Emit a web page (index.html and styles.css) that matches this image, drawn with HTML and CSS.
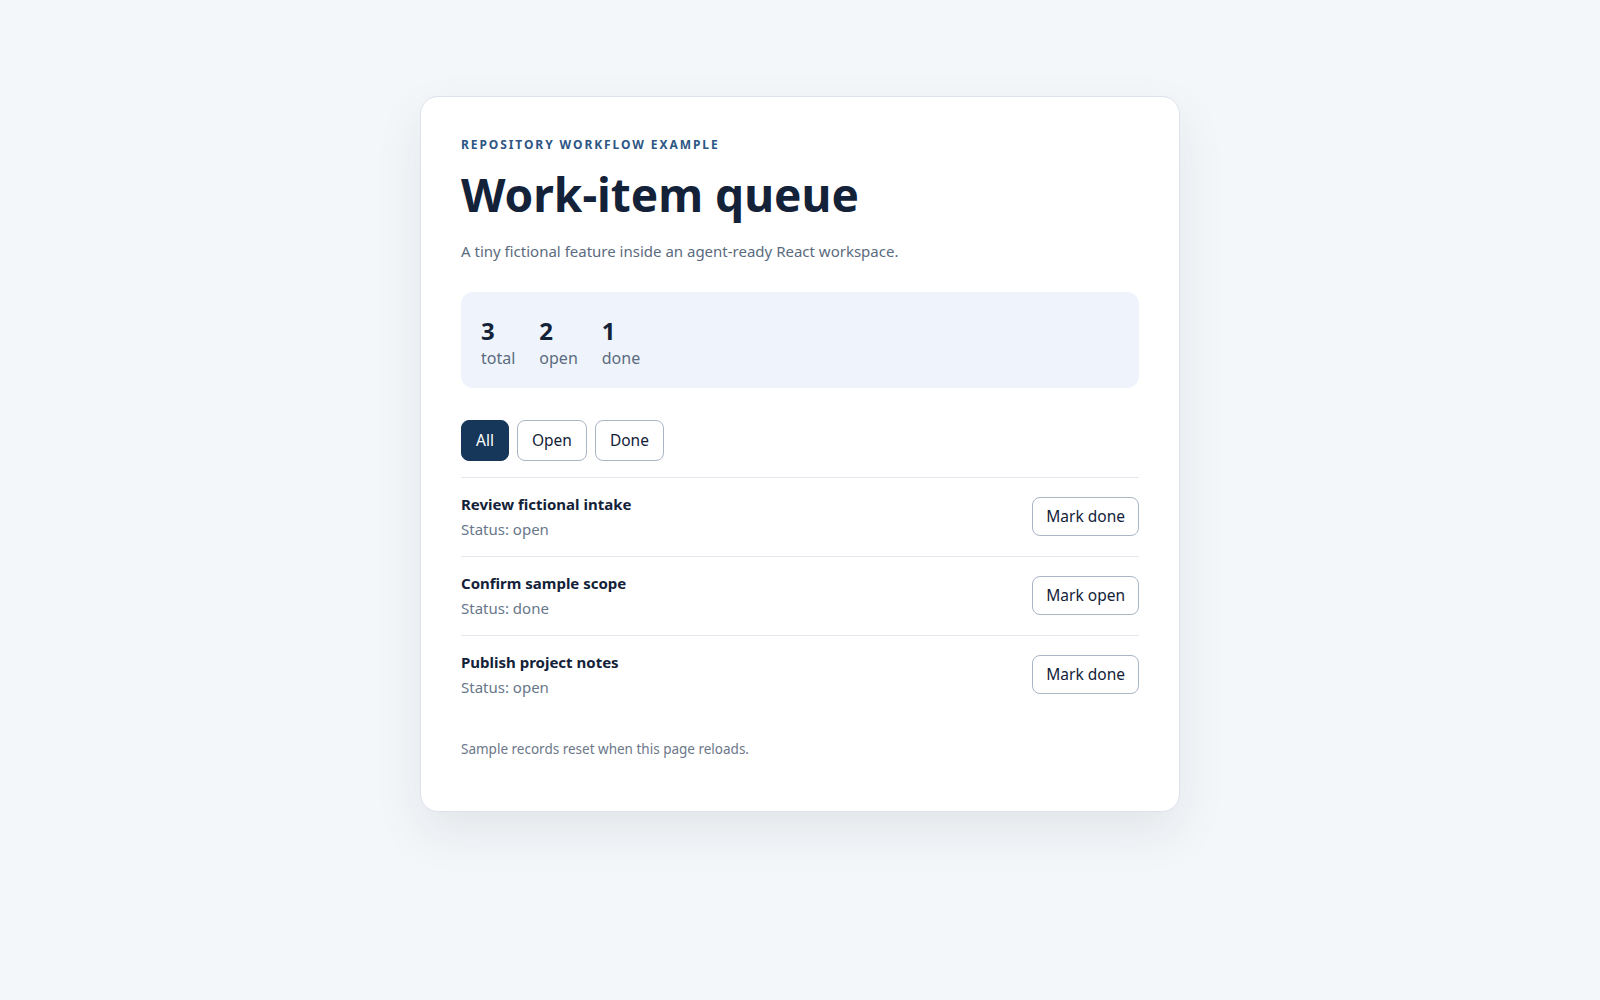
FILE: index.html
```html
<!DOCTYPE html>
<html lang="en">
<head>
  <meta charset="UTF-8" />
  <meta name="viewport" content="width=device-width, initial-scale=1.0" />
  <title>Work-item queue</title>
  <link rel="stylesheet" href="styles.css">
</head>
<body>
  <main class="card">
    <p class="eyebrow">Repository workflow example</p>
    <h1>Work-item queue</h1>
    <p class="lead">A tiny fictional feature inside an agent-ready React workspace.</p>

    <section class="stats">
      <div class="stat"><strong>3</strong><span>total</span></div>
      <div class="stat"><strong>2</strong><span>open</span></div>
      <div class="stat"><strong>1</strong><span>done</span></div>
    </section>

    <div class="filters">
      <button class="btn active">All</button>
      <button class="btn">Open</button>
      <button class="btn">Done</button>
    </div>

    <ul class="items">
      <li class="item">
        <div>
          <div class="item-title">Review fictional intake</div>
          <div class="item-status">Status: open</div>
        </div>
        <button class="btn">Mark done</button>
      </li>
      <li class="item">
        <div>
          <div class="item-title">Confirm sample scope</div>
          <div class="item-status">Status: done</div>
        </div>
        <button class="btn">Mark open</button>
      </li>
      <li class="item">
        <div>
          <div class="item-title">Publish project notes</div>
          <div class="item-status">Status: open</div>
        </div>
        <button class="btn">Mark done</button>
      </li>
    </ul>

    <p class="note">Sample records reset when this page reloads.</p>
  </main>
</body>
</html>
```

FILE: styles.css
```css
:root {
  --ink: #132238;
  --muted: #5b6b80;
  --accent: #2d5685;
  --line: #e3e8ee;
  --btn-border: #a9b6c6;
  --radius: 8px;
}
* {
  box-sizing: border-box;
}
html, body {
  margin: 0;
  padding: 0;
}
body {
  font-family: 'Segoe UI', 'Noto Sans', sans-serif;
  background: #f4f7fa;
  color: var(--ink);
  padding: 96px 0;
}
.card {
  width: 760px;
  margin: 0 auto;
  background: #ffffff;
  border: 1px solid #dde3ea;
  border-radius: 18px;
  box-shadow: 0 20px 50px rgba(15, 23, 42, 0.08);
  padding: 40px;
}
.eyebrow {
  margin: 0;
  font-size: 12px;
  line-height: 16px;
  font-weight: 700;
  letter-spacing: 0.16em;
  text-transform: uppercase;
  color: var(--accent);
}
h1 {
  margin: 16px 0 0;
  font-size: 46px;
  line-height: 1.1;
  font-weight: 700;
  color: var(--ink);
}
.lead {
  margin: 19px 0 0;
  font-size: 15px;
  line-height: 24px;
  color: var(--muted);
}
.stats {
  margin-top: 29px;
  background: #eff4fc;
  border-radius: 12px;
  padding: 24px 20px 18px;
  display: flex;
  gap: 24px;
}
.stat {
  display: flex;
  flex-direction: column;
}
.stat strong {
  font-size: 24px;
  line-height: 30px;
}
.stat span {
  font-size: 16px;
  line-height: 24px;
  color: var(--muted);
}
.filters {
  margin-top: 32px;
  display: flex;
  gap: 8px;
}
.btn {
  font-family: inherit;
  font-size: 15.5px;
  line-height: 21px;
  padding: 9px 14px;
  border: 1px solid var(--btn-border);
  border-radius: var(--radius);
  background: #ffffff;
  color: var(--ink);
  cursor: pointer;
}
.btn.active {
  background: #16365a;
  border-color: #16365a;
  color: #ffffff;
}
.items {
  list-style: none;
  margin: 16px 0 0;
  padding: 0;
}
.item {
  display: flex;
  align-items: center;
  justify-content: space-between;
  padding: 16px 0;
  border-top: 1px solid var(--line);
}
.item .btn {
  padding: 8px 13px;
}
.item-title {
  font-size: 15px;
  line-height: 20px;
  font-weight: 700;
}
.item-status {
  margin-top: 5px;
  font-size: 15px;
  line-height: 21px;
  color: #68778a;
}
.note {
  margin: 25px 0 12px;
  font-size: 13.5px;
  line-height: 20px;
  color: #6b7788;
}
```
